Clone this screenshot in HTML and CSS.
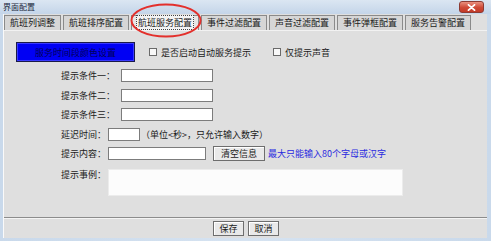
FILE: index.html
```html
<!DOCTYPE html>
<html lang="zh-CN">
<head>
    <meta charset="UTF-8">
    <title>界面配置</title>
    <link rel="stylesheet" href="styles.css">
</head>
<body>
    <div class="window">
        <div class="titlebar">
            <span class="title">界面配置</span>
            <span class="close">
                <svg width="9" height="7" viewBox="0 0 9 7"><path d="M1.5 0.8 L7.5 6.2 M7.5 0.8 L1.5 6.2" stroke="#fff" stroke-width="1.8" stroke-linecap="round"/></svg>
            </span>
        </div>

        <div class="frame">
            <div class="tabs">
                <div class="tab">航班列调整</div>
                <div class="tab">航班排序配置</div>
                <div class="tab active"><span class="focus">航班服务配置</span></div>
                <div class="tab">事件过滤配置</div>
                <div class="tab">声音过滤配置</div>
                <div class="tab">事件弹框配置</div>
                <div class="tab">服务告警配置</div>
            </div>

            <div class="panel">
                <div class="top-row">
                    <button class="color-btn">服务时间段颜色设置</button>
                    <label class="check"><span class="box"></span>是否启动自动服务提示</label>
                    <label class="check second"><span class="box"></span>仅提示声音</label>
                </div>

                <div class="form">
                    <div class="row">
                        <span class="label wide">提示条件一：</span>
                        <input class="field" type="text">
                    </div>
                    <div class="row">
                        <span class="label wide">提示条件二：</span>
                        <input class="field" type="text">
                    </div>
                    <div class="row">
                        <span class="label wide">提示条件三：</span>
                        <input class="field" type="text">
                    </div>
                    <div class="row">
                        <span class="label">延迟时间：</span>
                        <input class="field short" type="text">
                        <span class="hint">（单位&lt;秒&gt;，只允许输入数字）</span>
                    </div>
                    <div class="row">
                        <span class="label">提示内容：</span>
                        <input class="field content" type="text">
                        <button class="btn clear">清空信息</button>
                        <span class="limit">最大只能输入80个字母或汉字</span>
                    </div>
                    <div class="row example">
                        <span class="label">提示事例：</span>
                        <div class="sample"></div>
                    </div>
                </div>

                <svg class="mark" width="72" height="35" viewBox="0 0 72 35">
                    <ellipse cx="36" cy="17.5" rx="34.5" ry="16" fill="none" stroke="#e3302c" stroke-width="2"/>
                </svg>
            </div>

            <div class="footer">
                <button class="btn">保存</button>
                <button class="btn">取消</button>
            </div>
        </div>
    </div>
</body>
</html>
```

FILE: styles.css
```css
* {
    margin: 0;
    padding: 0;
    box-sizing: border-box;
    font-family: "Noto Sans CJK SC", "Liberation Sans", sans-serif;
}

body {
    width: 491px;
    height: 241px;
    background: #cddcec;
    overflow: hidden;
}

.window {
    width: 491px;
    height: 241px;
    display: flex;
    flex-direction: column;
    background: linear-gradient(90deg, #c9d9eb 0%, #d6e3f1 50%, #c9d9eb 100%);
}

.titlebar {
    height: 14px;
    display: flex;
    justify-content: space-between;
    align-items: center;
    padding: 0 7px 0 3px;
    background: linear-gradient(180deg, #dbe6f2 0%, #c4d5e9 100%);
}

.title {
    font-size: 8px;
    line-height: 10px;
    color: #1c2a3e;
}

.close {
    width: 25px;
    height: 12px;
    border-radius: 3px;
    border: 1px solid #8d3b33;
    background: linear-gradient(180deg, #e9907f 0%, #cf4a37 55%, #c23a28 100%);
    display: flex;
    justify-content: center;
    align-items: center;
}

.frame {
    flex: 1;
    margin: 0 4px 3px 3px;
    background: #dfdfdf;
    border-left: 1px solid #fafafa;
    display: flex;
    flex-direction: column;
    position: relative;
}

.tabs {
    display: flex;
    gap: 2px;
    height: 17px;
    padding-top: 1px;
    border-bottom: 1px solid #f2f2f2;
}

.tab {
    font-size: 9px;
    line-height: 14px;
    padding: 0 5px;
    color: #1a1a1a;
    background: #d6d6d6;
    border: 1px solid #8a8a8a;
    border-bottom: none;
    white-space: nowrap;
}

.tab.active {
    background: #e6e6e6;
    padding: 0 4px;
}

.tab .focus {
    border: 1px dotted #444;
    background: #f4f4f4;
    padding: 0 1px;
}

.panel {
    flex: 1;
    position: relative;
    padding: 11px 0 0 12px;
}

.top-row {
    display: flex;
    align-items: center;
}

.color-btn {
    width: 119px;
    height: 20px;
    background: #0000f4;
    border: 1px solid #1a1a4a;
    box-shadow: inset 0 0 0 1px #3a3aff;
    color: #00005a;
    font-size: 9px;
}

.check {
    display: flex;
    align-items: center;
    font-size: 9px;
    color: #1a1a1a;
    margin-left: 14px;
}

.check.second {
    margin-left: 22px;
}

.box {
    width: 8px;
    height: 8px;
    border: 1px solid #6a6a6a;
    background: #f8f8f8;
    margin-right: 4px;
}

.form {
    display: flex;
    flex-direction: column;
    gap: 6.5px;
    margin: 7px 0 0 45px;
}

.row {
    display: flex;
    align-items: center;
    height: 13px;
    font-size: 9px;
    color: #1a1a1a;
}

.label {
    width: 47px;
    white-space: nowrap;
}

.label.wide {
    width: 60px;
}

.field {
    width: 92px;
    height: 13px;
    border: 1px solid #7c7c7c;
    background: #fff;
}

.field.short {
    width: 32px;
}

.field.content {
    width: 98px;
}

.hint {
    margin-left: 1px;
}

.btn {
    height: 15px;
    font-size: 9px;
    padding: 0 5px;
    color: #1a1a1a;
    background: #e9e9e9;
    border: 1px solid #6e6e6e;
    box-shadow: inset 1px 1px 0 #fff;
}

.btn.clear {
    margin-left: 7px;
    width: 52px;
}

.limit {
    color: #2a2ae0;
    margin-left: 3px;
}

.row.example {
    height: 27px;
    margin-top: 2px;
    align-items: flex-start;
}

.row.example .label {
    line-height: 12px;
}

.sample {
    width: 295px;
    height: 27px;
    background: #fcfcfc;
    border: 1px solid #ececec;
}

.mark {
    position: absolute;
    left: 126px;
    top: -28px;
}

.footer {
    height: 21px;
    border-top: 1px solid #8c8c8c;
    box-shadow: inset 0 1px 0 #f4f4f4;
    display: flex;
    justify-content: center;
    align-items: center;
    gap: 4px;
    padding-left: 1px;
}

.footer .btn {
    width: 31px;
    padding: 0;
}
```
